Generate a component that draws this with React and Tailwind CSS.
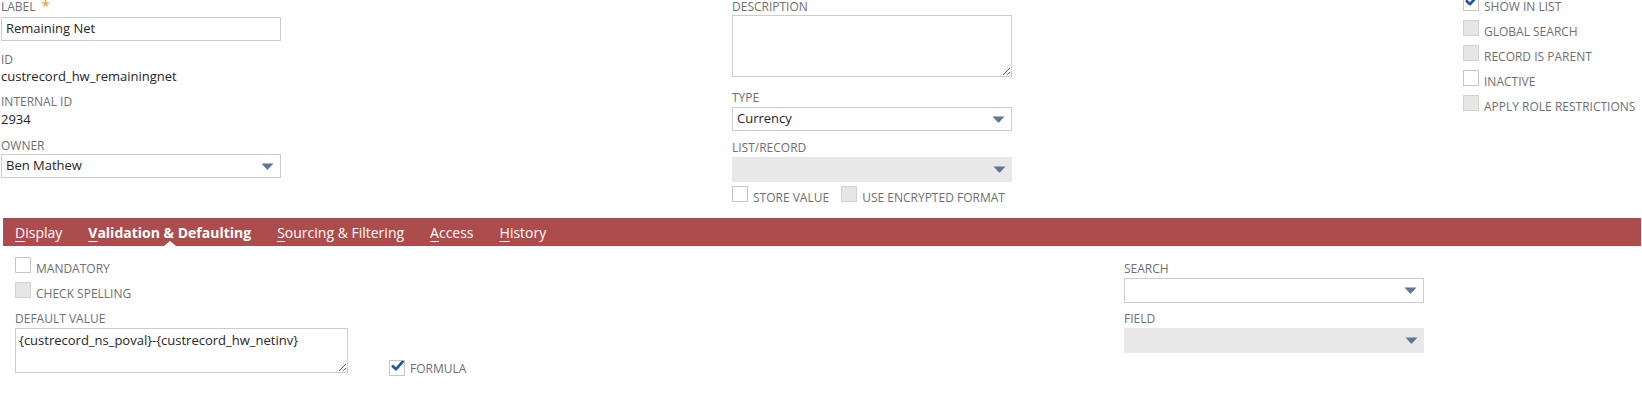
import React from 'react';

const Check = () => (
  <svg width="14" height="12" viewBox="0 0 14 12" className="-mt-[4px] ml-[1px]">
    <path d="M2 6.2 L5.4 9.4 L12.4 1.6" fill="none" stroke="#24569a" strokeWidth="3" strokeLinecap="round" strokeLinejoin="round" />
  </svg>
);

const Box = ({ checked, disabled }) => (
  <span
    className={
      disabled
        ? 'w-4 h-4 shrink-0 border border-[#d2d2d2] bg-[#e6e6e6] flex items-center justify-center'
        : 'w-4 h-4 shrink-0 border border-[#c6c6c6] bg-white flex items-center justify-center'
    }
  >
    {checked && <Check />}
  </span>
);

const CheckRow = ({ label, checked, disabled, centered, className = '' }) => (
  <div className={`flex ${centered ? 'items-center' : 'items-end'} ${className}`}>
    <Box checked={checked} disabled={disabled} />
    <span
      className={
        centered
          ? 'ml-[5px] mt-[2px] text-[12px] leading-[12px] text-[#6f6f6f] uppercase whitespace-nowrap'
          : 'ml-[5px] text-[12px] leading-[12px] -mb-[2px] text-[#6f6f6f] uppercase whitespace-nowrap'
      }
    >
      {label}
    </span>
  </div>
);

const Label = ({ children, className = '' }) => (
  <div className={`text-[12px] leading-[14px] text-[#6f6f6f] uppercase whitespace-nowrap ${className}`}>
    {children}
  </div>
);

const Arrow = () => (
  <svg width="13" height="7" viewBox="0 0 13 7" className="ml-auto shrink-0">
    <path d="M0.5 0.5 H12.5 L7.2 6.3 Q6.5 7 5.8 6.3 Z" fill="#5f7698" />
  </svg>
);

const Select = ({ value, disabled, className = '' }) => (
  <div
    className={
      disabled
        ? `h-[25px] bg-[#e8e8e8] flex items-center pr-[6px] ${className}`
        : `h-[24px] border border-[#cccccc] bg-white flex items-center pl-[4px] pr-[6px] ${className}`
    }
  >
    {value && <span className="text-[13px] text-[#262626]">{value}</span>}
    <Arrow />
  </div>
);

const tabs = [
  { key: 'D', rest: 'isplay' },
  { key: 'V', rest: 'alidation & Defaulting', active: true },
  { key: 'S', rest: 'ourcing & Filtering' },
  { key: 'A', rest: 'ccess' },
  { key: 'H', rest: 'istory' },
];

export default function App() {
  return (
    <div className="w-[1642px] h-[395px] bg-white overflow-hidden font-['Open_Sans',sans-serif]">
      {/* header fields */}
      <div className="flex h-[218px]">
        <div className="ml-[1px] w-[280px] flex flex-col">
          <Label>
            Label<span className="ml-[6px] text-[15px] leading-[10px] text-[#ef9421]">*</span>
          </Label>
          <div className="mt-[3px] h-[24px] border border-[#cccccc] flex items-center pl-[4px] text-[13px] text-[#262626]">
            Remaining Net
          </div>
          <Label className="mt-[12px]">ID</Label>
          <div className="mt-[1px] text-[13px] leading-[16px] text-[#262626]">custrecord_hw_remainingnet</div>
          <Label className="mt-[11px]">Internal ID</Label>
          <div className="mt-[2px] text-[13px] leading-[16px] text-[#262626]">2934</div>
          <Label className="mt-[12px]">Owner</Label>
          <Select value="Ben Mathew" className="mt-[1px]" />
        </div>

        <div className="ml-[451px] w-[280px] flex flex-col">
          <Label>Description</Label>
          <textarea className="mt-[1px] h-[62px] w-full border border-[#cccccc] outline-none" />
          <Label className="mt-[14px]">Type</Label>
          <Select value="Currency" className="mt-[2px]" />
          <Label className="mt-[10px]">List/Record</Label>
          <Select disabled className="mt-[2px]" />
          <div className="mt-[4px] flex">
            <CheckRow label="Store Value" />
            <CheckRow label="Use Encrypted Format" disabled className="ml-[12px]" />
          </div>
        </div>

        <div className="ml-[451px] -mt-[14px] flex flex-col">
          <CheckRow label="Show in List" checked className="h-[25px]" />
          <CheckRow label="Global Search" disabled className="h-[25px]" />
          <CheckRow label="Record is Parent" disabled className="h-[25px]" />
          <CheckRow label="Inactive" className="h-[25px]" />
          <CheckRow label="Apply Role Restrictions" disabled className="h-[25px]" />
        </div>
      </div>

      {/* tab bar */}
      <div className="ml-[3px] mr-[1px] h-[28px] bg-[#ad4c4c] flex items-center pl-[12px]">
        {tabs.map((t, i) => (
          <div
            key={t.key}
            className={`relative h-full flex items-center text-[14px] text-white whitespace-nowrap ${i > 0 ? 'ml-[26px]' : ''} ${t.active ? 'font-bold' : ''}`}
          >
            <span>
              <span className="underline underline-offset-[3px] decoration-1">{t.key}</span>
              {t.rest}
            </span>
            {t.active && (
              <span className="absolute bottom-0 left-1/2 -ml-[6px] w-0 h-0 border-l-[6px] border-r-[6px] border-b-[5px] border-l-transparent border-r-transparent border-b-white" />
            )}
          </div>
        ))}
      </div>

      {/* subtab content */}
      <div className="flex">
        <div className="ml-[15px] w-[333px] flex flex-col">
          <CheckRow label="Mandatory" className="mt-[11px]" />
          <CheckRow label="Check Spelling" disabled className="mt-[9px]" />
          <Label className="mt-[14px]">Default Value</Label>
          <textarea
            className="mt-[2px] h-[45px] w-full border border-[#cccccc] outline-none px-[3px] py-[2px] text-[13px] leading-[18px] text-[#262626]"
            defaultValue="{custrecord_ns_poval}-{custrecord_hw_netinv}"
          />
        </div>
        <div className="ml-[41px] w-[735px]">
          <CheckRow label="Formula" checked centered className="mt-[114px]" />
        </div>
        <div className="w-[300px] flex flex-col">
          <Label className="mt-[16px]">Search</Label>
          <Select className="mt-[2px] h-[25px]" />
          <Label className="mt-[9px]">Field</Label>
          <Select disabled className="mt-[2px]" />
        </div>
      </div>
    </div>
  );
}
